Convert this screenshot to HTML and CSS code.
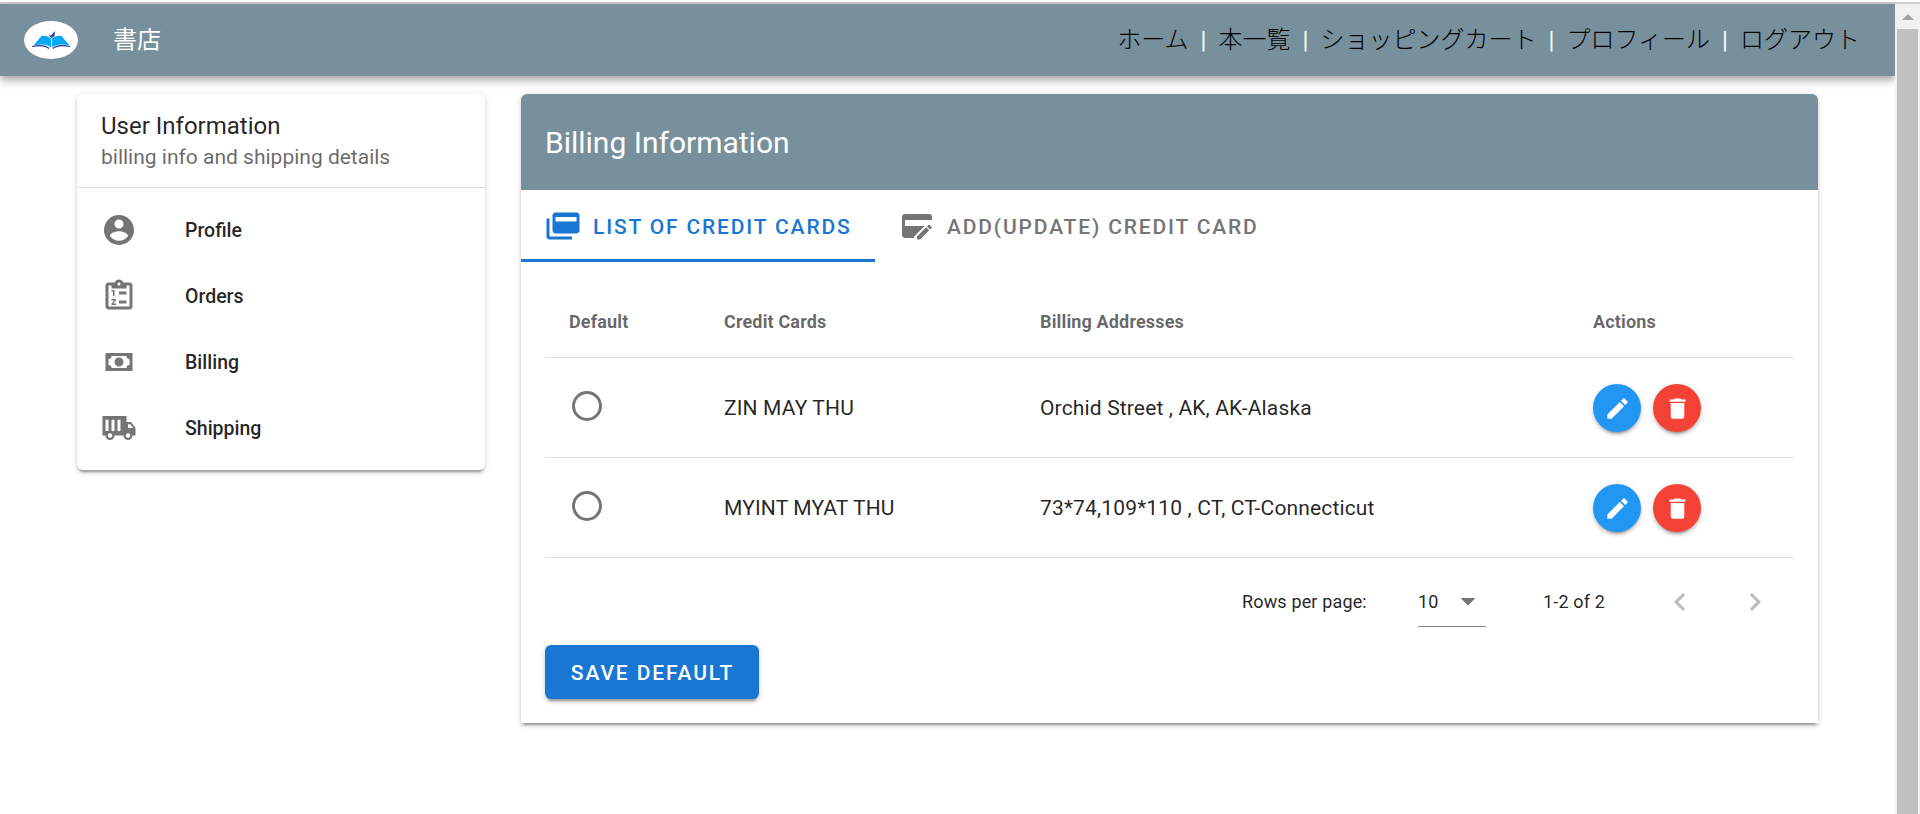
FILE: index.html
```html
<!DOCTYPE html>
<html lang="ja">
<head>
<meta charset="utf-8">
<title>書店</title>
<link rel="stylesheet" href="styles.css">
</head>
<body>
<div class="frame">
  <div class="page">
    <header class="appbar">
      <svg class="logo" viewBox="0 0 54 38">
        <ellipse cx="27" cy="19" rx="27" ry="19" fill="#fff"/>
        <path d="M9.500 24.500L17.500 15Q23.500 14 27.500 17.500Q31.500 14 37.500 15L45.500 24.500Q34 22 27.500 26.500Q21 22 9.500 24.500Z" fill="#03a9f4"/>
        <path d="M27.500 16V27" stroke="#fff" stroke-width="1"/>
        <path d="M8 25.500Q20 23 25 27.500M46 25.500Q34 23 29 27.500" fill="none" stroke="#283593" stroke-width="1.100"/>
        <path d="M24.500 13.500L27 14.500L31 10L30.500 15L27.500 17Z" fill="#283593"/>
      </svg>
      <div class="brand">書店</div>
      <nav class="nav">
        <a>ホーム</a><span class="bar">|</span><a>本一覧</a><span class="bar">|</span><a>ショッピングカート</a><span class="bar">|</span><a>プロフィール</a><span class="bar">|</span><a>ログアウト</a>
      </nav>
    </header>
    <main class="content">
      <aside class="card side">
        <div class="side-head">
          <div class="side-title">User Information</div>
          <div class="side-sub">billing info and shipping details</div>
        </div>
        <ul class="menu">
          <li class="item"><svg class="icon" viewBox="0 0 24 24"><path d="M12,19.200C9.500,19.200 7.290,17.920 6,16C6.030,14 10,12.900 12,12.900C14,12.900 17.970,14 18,16C16.710,17.920 14.500,19.200 12,19.200M12,5A3,3 0 0,1 15,8A3,3 0 0,1 12,11A3,3 0 0,1 9,8A3,3 0 0,1 12,5M12,2A10,10 0 0,0 2,12A10,10 0 0,0 12,22A10,10 0 0,0 22,12C22,6.470 17.500,2 12,2Z"/></svg>Profile</li>
          <li class="item"><svg class="icon" viewBox="0 0 24 24"><path fill-rule="evenodd" d="M19 3H14.820C14.400 1.840 13.300 1 12 1S9.600 1.840 9.180 3H5C3.900 3 3 3.900 3 5V19C3 20.100 3.900 21 5 21H19C20.100 21 21 20.100 21 19V5C21 3.900 20.100 3 19 3ZM12 3A1 1 0 0 1 12 5A1 1 0 0 1 12 3ZM7 7H17V5H19V19H5V5H7Z"/><path d="M12 9H17V11H12ZM12 15H17V17H12ZM8 12V9H7V8H9V12ZM9.250 14C9.660 14 10 14.340 10 14.750C10 14.950 9.920 15.140 9.790 15.270L8.120 17H10V18H7V17.080L9 15H7V14Z"/></svg>Orders</li>
          <li class="item"><svg class="icon" viewBox="0 0 24 24"><path d="M3,6H21V18H3V6M12,9A3,3 0 0,1 15,12A3,3 0 0,1 12,15A3,3 0 0,1 9,12A3,3 0 0,1 12,9M7,8A2,2 0 0,1 5,10V14A2,2 0 0,1 7,16H17A2,2 0 0,1 19,14V10A2,2 0 0,1 17,8H7Z"/></svg>Billing</li>
          <li class="item"><svg class="icon" viewBox="0 0 24 24"><path fill-rule="evenodd" d="M1 4H17V8H20L23 12V17H21A3 3 0 0 1 15 17H9A3 3 0 0 1 3 17H1ZM18 9.500V12H21.470L19.500 9.500ZM6 15.500A1.500 1.500 0 0 0 6 18.500A1.500 1.500 0 0 0 6 15.500ZM18 15.500A1.500 1.500 0 0 0 18 18.500A1.500 1.500 0 0 0 18 15.500ZM3 6.500V14H5V6.500ZM7 6.500V14H9V6.500ZM11 6.500V14H13V6.500Z"/></svg>Shipping</li>
        </ul>
      </aside>
      <section class="card main">
        <div class="main-head">Billing Information</div>
        <div class="tabs">
          <div class="tab tab-on"><svg class="icon" viewBox="0 0 24 24"><path fill-rule="evenodd" d="M21 3H7C5.890 3 5 3.890 5 5V15C5 16.110 5.890 17 7 17H21C22.110 17 23 16.110 23 15V5C23 3.890 22.110 3 21 3ZM21 9H7V6H21ZM3 19H18V21H3C1.890 21 1 20.110 1 19V7H3Z"/></svg>LIST OF CREDIT CARDS</div>
          <div class="tab"><svg class="icon" viewBox="0 0 24 24"><path d="M21.700 13.350L20.700 14.350L18.650 12.300L19.650 11.300C19.860 11.090 20.210 11.090 20.420 11.300L21.700 12.580C21.910 12.790 21.910 13.140 21.700 13.350M12 18.940V21H14.060L20.120 14.880L18.070 12.830L12 18.940"/><path d="M4 4H20C21.110 4 22 4.890 22 6V8H4V12H17.100L10 19.100V20H4C2.890 20 2 19.110 2 18V6C2 4.890 2.890 4 4 4Z"/></svg>ADD(UPDATE) CREDIT CARD</div>
        </div>
        <div class="body">
          <div class="row row-head"><div>Default</div><div>Credit Cards</div><div>Billing Addresses</div><div>Actions</div></div>
          <div class="row">
            <div><span class="radio"></span></div><div>ZIN MAY THU</div><div>Orchid Street , AK, AK-Alaska</div>
            <div class="actions"><span class="fab fab-edit"><svg viewBox="0 0 24 24"><path d="M20.710,7.040C21.100,6.650 21.100,6 20.710,5.630L18.370,3.290C18,2.900 17.350,2.900 16.960,3.290L15.120,5.120L18.870,8.870M3,17.250V21H6.750L17.810,9.930L14.060,6.180L3,17.250Z"/></svg></span><span class="fab fab-del"><svg viewBox="0 0 24 24"><path d="M19,4H15.500L14.500,3H9.500L8.500,4H5V6H19M6,19A2,2 0 0,0 8,21H16A2,2 0 0,0 18,19V7H6V19Z"/></svg></span></div>
          </div>
          <div class="row">
            <div><span class="radio"></span></div><div>MYINT MYAT THU</div><div>73*74,109*110 , CT, CT-Connecticut</div>
            <div class="actions"><span class="fab fab-edit"><svg viewBox="0 0 24 24"><path d="M20.710,7.040C21.100,6.650 21.100,6 20.710,5.630L18.370,3.290C18,2.900 17.350,2.900 16.960,3.290L15.120,5.120L18.870,8.870M3,17.250V21H6.750L17.810,9.930L14.060,6.180L3,17.250Z"/></svg></span><span class="fab fab-del"><svg viewBox="0 0 24 24"><path d="M19,4H15.500L14.500,3H9.500L8.500,4H5V6H19M6,19A2,2 0 0,0 8,21H16A2,2 0 0,0 18,19V7H6V19Z"/></svg></span></div>
          </div>
          <div class="pager">
            <span class="pager-label">Rows per page:</span>
            <span class="select">10<svg class="icon" viewBox="0 0 24 24"><path d="M7,10L12,15L17,10H7Z"/></svg></span>
            <span class="range">1-2 of 2</span>
            <svg class="icon arrow" viewBox="0 0 24 24"><path d="M15.410,16.580L10.830,12L15.410,7.410L14,6L8,12L14,18L15.410,16.580Z"/></svg>
            <svg class="icon arrow" viewBox="0 0 24 24"><path d="M8.590,16.580L13.170,12L8.590,7.410L10,6L16,12L10,18L8.590,16.580Z"/></svg>
          </div>
          <button class="save">SAVE DEFAULT</button>
        </div>
      </section>
    </main>
  </div>
  <div class="scroll"><svg class="up" viewBox="0 0 12 6"><path d="M0 6L6 0L12 6Z"/></svg><div class="thumb"></div></div>
</div>
</body>
</html>
```
FILE: styles.css
```css
* { box-sizing: border-box; }
body { margin: 0; background: #fff; color: rgba(0,0,0,.87); font-family: Roboto, "Noto Sans CJK JP", sans-serif; }
.frame { display: flex; height: 814px; border-top: 2px solid #fff; overflow: hidden; }
.page { flex: 1; border-top: 2px solid #ccc; }
.appbar { display: flex; align-items: center; height: 72px; padding: 0 35px 0 24px; background: #78909c; box-shadow: 0 3px 6px -1.500px rgba(0,0,0,.2), 0 6px 7.500px rgba(0,0,0,.14), 0 1.500px 15px rgba(0,0,0,.12); }
.logo { width: 54px; height: 38px; }
.brand { margin-left: 35px; padding-bottom: 5px; color: #fff; font: 24px "Noto Sans CJK JP", sans-serif; }
.nav { display: flex; align-items: center; margin-left: auto; padding-bottom: 5px; color: #000; font: 300 24px "Noto Sans CJK JP", sans-serif; }
.bar { width: 30px; padding-top: 4px; text-align: center; color: #fff; font: 24px Roboto, sans-serif; }
.content { display: flex; align-items: flex-start; gap: 36px; padding: 18px 0 0 77px; }
.card { border-radius: 6px; background: #fff; box-shadow: 0 4.500px 1.500px -3px rgba(0,0,0,.2), 0 3px 3px rgba(0,0,0,.14), 0 1.500px 7.500px rgba(0,0,0,.12); }
.side { width: 408px; height: 376px; }
.side-head { height: 94px; padding: 16px 24px 0; border-bottom: 1px solid #dfdfdf; }
.side-title { font-size: 24px; line-height: 32px; }
.side-sub { color: rgba(0,0,0,.6); font-size: 21px; line-height: 30px; }
.menu { display: flex; flex-direction: column; gap: 6px; margin: 0; padding: 12px 24px; list-style: none; }
.item { display: flex; align-items: center; gap: 48px; height: 60px; padding-top: 1px; font-size: 19.500px; font-weight: 500; }
.icon { flex: none; width: 36px; height: 36px; fill: #757575; }
.item .icon { margin-top: -1px; }
.main { width: 1297px; height: 629px; border-radius: 6px 6px 0 0; }
.main-head { height: 96px; padding-left: 24px; border-radius: 6px 6px 0 0; background: #78909c; color: #fff; font-size: 30px; line-height: 98px; }
.tabs { display: flex; height: 72px; }
.tab { display: flex; align-items: center; gap: 12px; padding: 2px 24px 0; color: #757575; font-size: 21px; font-weight: 500; letter-spacing: 1.840px; white-space: nowrap; }
.tab .icon { margin-top: -2px; }
.tab-on { width: 354px; border-bottom: 3px solid #1976d2; padding-top: 5px; color: #1976d2; }
.tab-on .icon { fill: #1976d2; }
.body { padding: 24px; }
.row { display: grid; grid-template-columns: 155px 316px 553px 1fr; align-items: center; height: 100px; padding: 1px 0 0 24px; border-bottom: 1px solid #dfdfdf; font-size: 21px; letter-spacing: .150px; }
.row-head { height: 72px; padding-top: 0; color: rgba(0,0,0,.6); font-size: 18px; font-weight: 700; }
.radio { display: block; width: 30px; height: 30px; margin: -5px 0 0 3px; border: 3px solid #757575; border-radius: 50%; }
.actions { display: flex; gap: 12px; }
.fab { display: flex; align-items: center; justify-content: center; width: 48px; height: 48px; border-radius: 50%; box-shadow: 0 4.500px 1.500px -3px rgba(0,0,0,.2), 0 3px 3px rgba(0,0,0,.14), 0 1.500px 7.500px rgba(0,0,0,.12); }
.fab svg { width: 27px; height: 27px; fill: #fff; }
.fab-edit { background: #2196f3; }
.fab-del { background: #f44336; }
.pager { display: flex; align-items: center; height: 87px; font-size: 18px; letter-spacing: .150px; }
.pager > * { flex: none; }
.pager-label { margin-left: 697px; width: 176px; }
.select { display: flex; align-items: center; justify-content: space-between; width: 68px; height: 50px; border-bottom: 1px solid #888; }
.range { margin-left: 57px; width: 119px; }
.arrow { fill: #bbb; margin-right: 39px; }
.save { display: block; width: 214px; height: 54px; padding: 1px 0 0 1px; border: 0; border-radius: 6px; background: #1976d2; color: #fff; font: 500 21px Roboto, sans-serif; letter-spacing: 1.875px; box-shadow: 0 4.500px 1.500px -3px rgba(0,0,0,.2), 0 3px 3px rgba(0,0,0,.14), 0 1.500px 7.500px rgba(0,0,0,.12); }
.scroll { display: flex; flex-direction: column; align-items: center; width: 25px; border-top: 2px solid #ccc; background: #f1f1f1; }
.up { width: 12px; height: 6px; margin: 10px 0 9px; fill: #a3a3a3; }
.thumb { width: 21px; flex: 1; background: #c1c1c1; }
```
